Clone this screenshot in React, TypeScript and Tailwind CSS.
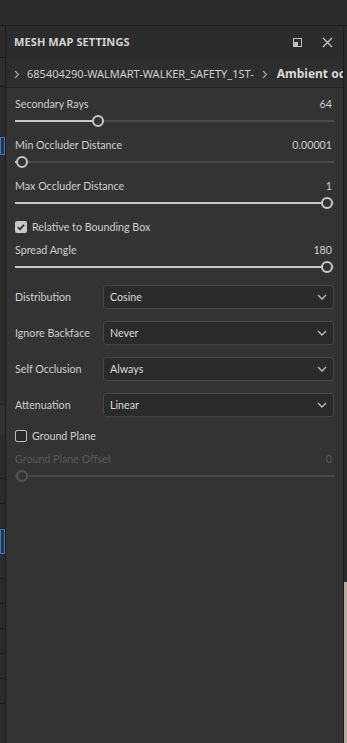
import React from "react";

const FONT = { fontFamily: '"Noto Sans", "Open Sans", Arial, sans-serif' };
const LATO = { fontFamily: 'Lato, "Noto Sans", Arial, sans-serif' };

function Slider({ pct, disabled }: { pct: number; disabled?: boolean }) {
  const left = 7 + pct * 305;
  const on = disabled ? "bg-[#4a4a4a]" : "bg-[#c8c8c8]";
  const thumb = disabled ? "border-[#555555]" : "border-[#c8c8c8]";
  return (
    <div className="relative h-[14px] mt-[2px]">
      <div className="absolute left-0 right-0 top-[6px] h-[2px] bg-[#4a4a4a]" />
      <div className={`absolute left-0 top-[6px] h-[2px] ${on}`} style={{ width: left }} />
      <div
        className={`absolute top-[1px] w-[12px] h-[12px] rounded-full border-2 ${thumb} bg-[#333333]`}
        style={{ left: left - 6 }}
      />
    </div>
  );
}

function SliderBlock({ label, value, pct, disabled }: { label: string; value: string; pct: number; disabled?: boolean }) {
  return (
    <div>
      <div
        className={`flex h-[16px] items-center justify-between text-[10.7px] pr-[2px] ${disabled ? "text-[#5a5a5a]" : "text-[#cfcfcf]"}`}
        style={LATO}
      >
        <span>{label}</span>
        <span>{value}</span>
      </div>
      <Slider pct={pct} disabled={disabled} />
    </div>
  );
}

function Check({ checked, label }: { checked: boolean; label: string }) {
  return (
    <div className="flex h-[16px] items-center gap-[5px] text-[10.7px] text-[#cfcfcf]" style={LATO}>
      {checked ? (
        <div className="w-[12px] h-[12px] rounded-[2px] bg-[#c8c8c8] flex items-center justify-center">
          <svg width="10" height="10" viewBox="0 0 10 10">
            <path d="M2 5.2 L4.1 7.3 L8 2.8" fill="none" stroke="#2a2a2a" strokeWidth="1.7" />
          </svg>
        </div>
      ) : (
        <div className="w-[12px] h-[12px] rounded-[2px] border-[1.5px] border-[#bdbdbd] bg-[#2a2a2a]" />
      )}
      <span>{label}</span>
    </div>
  );
}

function Select({ label, value }: { label: string; value: string }) {
  return (
    <div className="flex items-center h-[24px] text-[10.7px] text-[#cfcfcf]" style={LATO}>
      <div className="w-[88px] shrink-0">{label}</div>
      <div className="flex-1 h-[24px] flex items-center justify-between rounded-[3px] border border-[#464646] bg-[#2a2a2a] pl-[6px] pr-[6px]">
        <span className="text-[#dcdcdc] pt-[1px]">{value}</span>
        <svg width="10" height="6" viewBox="0 0 10 6">
          <path d="M1 1 L5 5 L9 1" fill="none" stroke="#bdbdbd" strokeWidth="1.3" />
        </svg>
      </div>
    </div>
  );
}

function LeftStrip() {
  return (
    <div className="w-[5px] shrink-0 bg-[#2c2c2c] flex flex-col">
      <div className="h-[32px] border-b border-[#1e1e1e]" />
      <div className="h-[29px] bg-[#2f2f2f] border-b border-[#1e1e1e]" />
      <div className="h-[50px]" />
      <div className="h-[18px] border border-[#3b78b5] bg-[#273444]" />
      <div className="h-[250px] border-b border-[#222]" />
      <div className="h-[30px] bg-[#303030]" />
      <div className="h-[44px] border-b border-[#1e1e1e]" />
      {[0, 1].map((i) => (
        <div key={i} className="h-[25px] border-b border-[#1e1e1e]" />
      ))}
      <div className="h-[25px] border border-[#3b78b5] bg-[#273444]" />
      {[0, 1, 2, 3, 4, 5].map((i) => (
        <div key={i} className="h-[25px] border-b border-[#1e1e1e]" />
      ))}
    </div>
  );
}

export default function App() {
  return (
    <div className="w-[347px] h-[743px] bg-[#2b2b2b] flex flex-col overflow-hidden" style={FONT}>
      <div className="h-[26px] shrink-0 bg-[#2b2b2b] border-b border-[#1f1f1f]" />
      <div className="flex flex-1 min-h-0">
        <LeftStrip />
        <div className="w-[1px] bg-[#1c1c1c]" />
        <div className="w-[337px] flex flex-col bg-[#333333]">
          <div className="h-[33px] shrink-0 bg-[#2c2c2c] flex items-center justify-between pl-[8px] pr-[10px]">
            <span className="text-[11px] font-bold text-[#d4d4d4] tracking-[0.1px]">MESH MAP SETTINGS</span>
            <div className="flex items-center gap-[20px]">
              <svg width="9" height="9" viewBox="0 0 9 9">
                <rect x="0.5" y="0.5" width="8" height="8" fill="none" stroke="#bfbfbf" strokeWidth="1" />
                <rect x="1" y="4" width="4" height="4" fill="#bfbfbf" />
              </svg>
              <svg width="11" height="11" viewBox="0 0 11 11">
                <path d="M1 1 L10 10 M10 1 L1 10" stroke="#c8c8c8" strokeWidth="1.2" />
              </svg>
            </div>
          </div>
          <div className="h-[29px] shrink-0 bg-[#2e2e2e] border-b border-[#252525] flex items-center pl-[8px] pt-[2px] text-[11px] text-[#cfcfcf] whitespace-nowrap overflow-hidden">
            <svg width="6" height="9" viewBox="0 0 6 9" className="shrink-0">
              <path d="M1 1 L4.5 4.5 L1 8" fill="none" stroke="#aaaaaa" strokeWidth="1.1" />
            </svg>
            <span className="ml-[7px]">685404290-WALMART-WALKER_SAFETY_1ST-</span>
            <svg width="6" height="9" viewBox="0 0 6 9" className="shrink-0 ml-[8px]">
              <path d="M1 1 L4.5 4.5 L1 8" fill="none" stroke="#aaaaaa" strokeWidth="1.1" />
            </svg>
            <span className="ml-[9px] font-bold text-[12px] text-[#d8d8d8]">Ambient oc</span>
          </div>
          <div className="flex-1 px-[9px] pt-[8px] flex flex-col">
            <div className="flex flex-col gap-[9px]">
              <SliderBlock label="Secondary Rays" value="64" pct={0.249} />
              <SliderBlock label="Min Occluder Distance" value="0.00001" pct={0} />
              <SliderBlock label="Max Occluder Distance" value="1" pct={1} />
            </div>
            <div className="mt-[9px]">
              <Check checked label="Relative to Bounding Box" />
            </div>
            <div className="mt-[7px]">
              <SliderBlock label="Spread Angle" value="180" pct={1} />
            </div>
            <div className="mt-[11px] flex flex-col gap-[12px]">
              <Select label="Distribution" value="Cosine" />
              <Select label="Ignore Backface" value="Never" />
              <Select label="Self Occlusion" value="Always" />
              <Select label="Attenuation" value="Linear" />
            </div>
            <div className="mt-[11px]">
              <Check checked={false} label="Ground Plane" />
            </div>
            <div className="mt-[7px]">
              <SliderBlock label="Ground Plane Offset" value="0" pct={0} disabled />
            </div>
          </div>
        </div>
        <div className="w-[1px] bg-[#1c1c1c]" />
        <div className="flex-1 flex flex-col bg-[#2b2b2b]">
          <div className="h-[556px]" />
          <div className="flex-1 bg-[#b8aa98]" />
        </div>
      </div>
    </div>
  );
}
